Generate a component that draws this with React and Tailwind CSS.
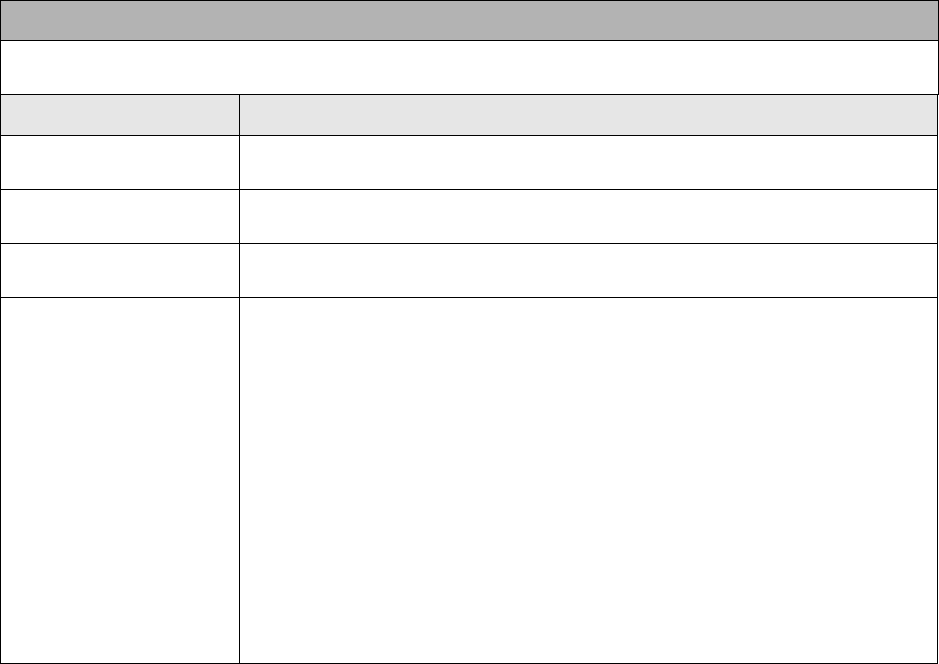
import React from "react";

const rows = [
  { h: "h-[54px]" },
  { h: "h-[54px]" },
  { h: "h-[54px]" },
];

export default function App() {
  return (
    <div className="w-[939px] h-[664px] bg-white font-['Liberation_Sans',sans-serif] text-sm text-black">
      {/* Title block */}
      <div className="w-[939px] border border-black">
        <div className="h-[40px] bg-[#b3b3b3] border-b border-black"></div>
        <div className="h-[53px] bg-white"></div>
      </div>

      {/* Two-column table */}
      <div className="w-[938px] border-x border-b border-black">
        <div className="flex h-[41px] bg-[#e6e6e6] border-b border-black">
          <div className="w-[239px] border-r border-black"></div>
          <div className="flex-1"></div>
        </div>
        {rows.map((r, i) => (
          <div key={i} className={`flex ${r.h} border-b border-black`}>
            <div className="w-[239px] border-r border-black"></div>
            <div className="flex-1"></div>
          </div>
        ))}
        <div className="flex h-[365px]">
          <div className="w-[239px] border-r border-black"></div>
          <div className="flex-1"></div>
        </div>
      </div>
    </div>
  );
}
